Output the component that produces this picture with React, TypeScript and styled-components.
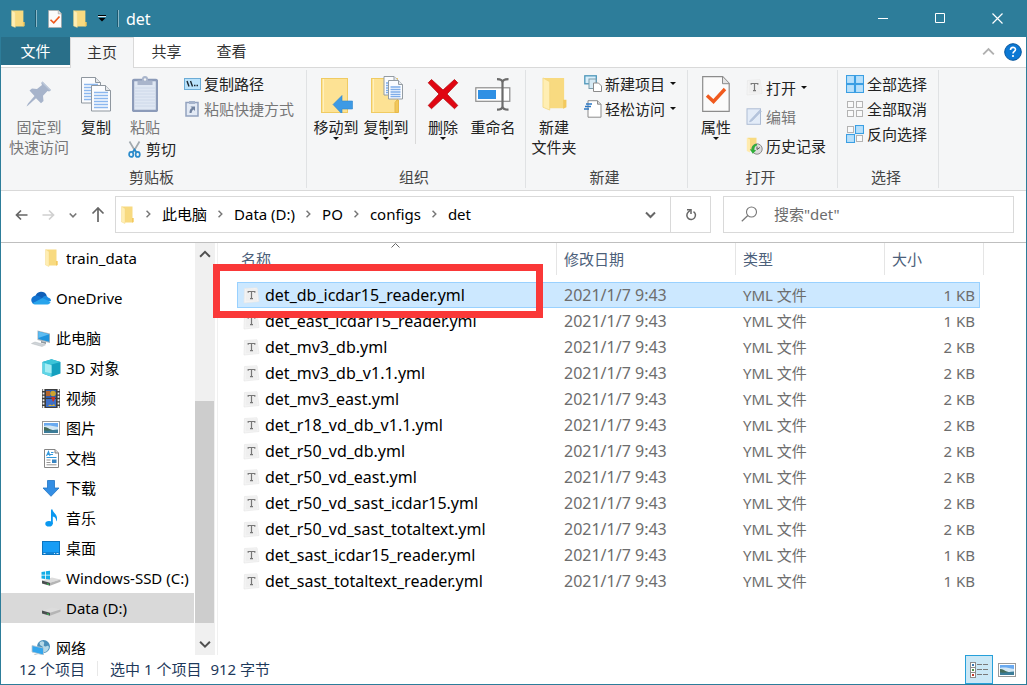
import React from "react";
import styled, { createGlobalStyle } from "styled-components";

const accent = "#2d7d9a";
const line = "#d9d9d9";

const Global = createGlobalStyle`
  *, *::before, *::after { box-sizing: border-box; }
  body {
    margin: 0;
    font: 15px/20px "Noto Sans", "Noto Sans CJK SC", sans-serif;
    color: #000;
    background: #fff;
  }
  button {
    font: inherit;
    color: inherit;
    background: none;
    border: 0;
    padding: 0;
    white-space: nowrap;
  }
  svg { display: block; flex: none; }
`;

const Window = styled.div`
  display: flex;
  flex-direction: column;
  height: 100vh;
  background: #fff;
  border: 1px solid ${accent};
  border-top: 0;
  overflow: hidden;
`;

/* ---------- title bar ---------- */
const TitleBar = styled.header`
  flex: none;
  display: flex;
  align-items: center;
  height: 37px;
  padding-left: 10px;
  background: ${accent};
  color: #fff;
`;
const TitleRule = styled.span`
  width: 2px;
  height: 17px;
  background: #1d5a70;
  border-right: 1px solid #8ab8c8;
`;
const QuickTools = styled.div`
  display: flex;
  align-items: center;
  gap: 11px;
  margin: 0 11px 0 10px;
`;
const Title = styled.h1`
  margin: 0 0 0 7px;
  font-size: 16px;
  font-weight: 400;
  line-height: 20px;
`;
const WindowButtons = styled.div`
  display: flex;
  margin-left: auto;
`;
const WindowButton = styled.button`
  display: grid;
  place-items: center;
  width: 57px;
  height: 37px;
`;

/* ---------- ribbon ---------- */
const TabBar = styled.nav`
  flex: none;
  display: flex;
  align-items: flex-start;
  height: 31px;
  border-bottom: 1px solid ${line};
  color: #333;
`;
const Tab = styled.button<{ $kind?: "file" | "active" }>`
  width: ${(p) => (p.$kind === "file" ? 69 : p.$kind === "active" ? 64 : 65)}px;
  height: ${(p) => (p.$kind === "active" ? 31 : 28)}px;
  padding-bottom: ${(p) => (p.$kind === "active" ? 2 : 0)}px;
  background: ${(p) => (p.$kind === "file" ? "#296f89" : p.$kind === "active" ? "#f5f6f7" : "transparent")};
  color: ${(p) => (p.$kind === "file" ? "#fff" : "inherit")};
  border: ${(p) => (p.$kind === "active" ? `1px solid ${line}` : "0")};
  border-bottom: 0;
`;
const TabTools = styled.div`
  display: flex;
  align-items: center;
  gap: 9px;
  height: 29px;
  margin-left: auto;
  padding-right: 4px;
`;
const IconButton = styled.button`
  display: grid;
  place-items: center;
`;
const Ribbon = styled.div`
  flex: none;
  display: flex;
  padding: 2px 0;
  background: #f5f6f7;
  border-bottom: 1px solid ${line};
  color: #222;
`;
const Group = styled.section<{ $width: number }>`
  display: flex;
  flex-direction: column;
  width: ${(p) => p.$width}px;
  height: 118px;
  padding-bottom: 1px;
  border-right: 1px solid #e0e2e4;
`;
const GroupBody = styled.div<{ $inset?: number }>`
  flex: 1;
  display: flex;
  align-items: flex-start;
  padding-left: ${(p) => p.$inset ?? 0}px;
`;
const GroupLabel = styled.h2`
  margin: 0;
  padding-right: 4px;
  font-size: 15px;
  font-weight: 400;
  line-height: 20px;
  text-align: center;
  color: #444;
`;
const BigButton = styled.button<{ $width: number }>`
  display: flex;
  flex-direction: column;
  align-items: center;
  width: ${(p) => p.$width}px;
  padding-top: 6px;
  line-height: 20px;
  &:disabled { color: #777; }
`;
const BigIcon = styled.span`
  display: grid;
  place-items: center;
  height: 36px;
  margin-bottom: 5px;
`;
const Stack = styled.div<{ $pitch: number; $left?: number }>`
  display: flex;
  flex-direction: column;
  align-items: flex-start;
  padding-top: ${(p) => (p.$pitch > 25 ? 3 : 1)}px;
  margin-left: ${(p) => p.$left ?? 0}px;
  & > button { height: ${(p) => p.$pitch}px; }
`;
const PasteStack = styled.div`
  display: flex;
  flex-direction: column;
  align-items: flex-start;
  gap: 2px;
  & > button + button { padding-left: 10px; }
`;
const SmallButton = styled.button`
  display: flex;
  align-items: center;
  gap: 3px;
  &:disabled { color: #777; }
`;
const SmallIcon = styled.span`
  display: grid;
  place-items: center;
  width: 18px;
  height: 18px;
`;
const GroupRule = styled.span`
  width: 1px;
  height: 55px;
  margin: 19px 2px 0 4px;
  background: ${line};
`;
const CaretGap = styled.span`
  margin-left: 2px;
`;

/* ---------- address row ---------- */
const AddressRow = styled.div`
  flex: none;
  display: flex;
  align-items: flex-start;
  height: 52px;
  padding: 5px 12px 0 14px;
  border-bottom: 1px solid #bfbfbf;
`;
const NavButtons = styled.div`
  display: flex;
  align-items: center;
  gap: 14px;
  width: 100px;
  height: 37px;
`;
const AddressBox = styled.div`
  flex: 1;
  display: flex;
  align-items: center;
  height: 37px;
  padding-left: 5px;
  border: 1px solid ${line};
`;
const Crumbs = styled.ol`
  flex: 1;
  display: flex;
  align-items: center;
  margin: 0;
  padding: 0 0 2px 1px;
  list-style: none;
  li { display: flex; align-items: center; }
  svg { margin: 0 10px 0 9px; }
  a { color: inherit; text-decoration: none; white-space: nowrap; }
`;
const BoxButton = styled(IconButton)<{ $ruled?: boolean }>`
  width: 40px;
  height: 35px;
  border-left: ${(p) => (p.$ruled ? `1px solid ${line}` : "0")};
`;
const SearchBox = styled.label`
  display: flex;
  align-items: center;
  gap: 16px;
  width: 291px;
  height: 37px;
  margin-left: 12px;
  padding: 0 0 2px 17px;
  border: 1px solid ${line};
  input {
    flex: 1;
    min-width: 0;
    padding: 0;
    border: 0;
    outline: 0;
    font: inherit;
    background: none;
  }
  input::placeholder { color: #6d6d6d; opacity: 1; }
`;

/* ---------- body ---------- */
const BodyFrame = styled.div`
  position: relative;
  flex: 1;
  display: flex;
  min-height: 0;
`;
const Body = styled.div`
  flex: 1;
  display: flex;
  min-width: 0;
  min-height: 0;
`;
const Tree = styled.nav`
  flex: none;
  width: 194px;
  overflow: hidden;
`;
const TreeItem = styled.a<{ $level: number; $gap?: boolean; $active?: boolean }>`
  display: flex;
  align-items: center;
  gap: 5px;
  height: 30px;
  margin-top: ${(p) => (p.$gap ? 10 : 0)}px;
  margin-right: 1px;
  padding-left: ${(p) => (p.$level ? 40 : 30)}px;
  background: ${(p) => (p.$active ? "#d9d9d9" : "transparent")};
  color: #000;
  text-decoration: none;
  white-space: nowrap;
`;
const TreeIcon = styled.span`
  flex: none;
  display: grid;
  place-items: center;
  width: 20px;
`;
const ScrollBar = styled.div`
  flex: none;
  display: flex;
  flex-direction: column;
  width: 20px;
  background: #f0f0f0;
`;
const ScrollButton = styled(IconButton)`
  height: 22px;
`;
const Track = styled.div`
  flex: 1;
  display: flex;
  flex-direction: column;
  justify-content: flex-end;
  padding-bottom: 10px;
`;
const Thumb = styled.div`
  height: 62%;
  margin-right: 1px;
  background: #cdcdcd;
`;
const Files = styled.main`
  position: relative;
  flex: 1;
  min-width: 0;
  margin-left: 2px;
  padding-left: 19px;
  border-left: 1px solid #f0f0f0;
  overflow: hidden;
`;
const FileTable = styled.table`
  width: 747px;
  table-layout: fixed;
  border-spacing: 0;
  tbody::before { content: ""; display: table-row; height: 7px; }
`;
const HeadCell = styled.th`
  position: relative;
  height: 32px;
  padding: 0 0 0 7px;
  border-right: 1px solid #e5e5e5;
  font-weight: 400;
  line-height: 20px;
  text-align: left;
  color: #4c607a;
  &:first-child { padding-left: 4px; }
`;
const SortMark = styled.span`
  position: absolute;
  top: 0;
  left: 50%;
  margin-left: -6px;
`;
const Row = styled.tr<{ $selected?: boolean }>`
  td {
    height: 26px;
    padding: 0 0 0 7px;
    line-height: 24px;
    color: #6d6d6d;
    white-space: nowrap;
    background: ${(p) => (p.$selected ? "#cce8ff" : "transparent")};
    border: 0 solid ${(p) => (p.$selected ? "#99d1ff" : "transparent")};
    border-width: 1px 0;
  }
  td:first-child { border-left-width: 1px; padding-left: 5px; color: #000; font-size: 16px; }
  td:nth-child(2) { font-size: 16px; }
  td:nth-child(4) { border-right-width: 1px; padding-right: 4px; text-align: right; }
  td:last-child { padding: 0; background: none; border: 0; }
`;
const FileName = styled.span`
  display: flex;
  align-items: center;
  gap: 5px;
`;
const Highlight = styled.div`
  position: absolute;
  top: 21px;
  left: 212px;
  width: 330px;
  height: 54px;
  border: 7px solid #fa3838;
  pointer-events: none;
`;

/* ---------- status bar ---------- */
const StatusBar = styled.footer`
  flex: none;
  display: flex;
  align-items: center;
  height: 29px;
  padding-left: 18px;
  color: #1e395b;
`;
const StatusText = styled.div`
  display: flex;
  align-items: center;
  padding-bottom: 2px;
`;
const StatusRule = styled.span`
  width: 1px;
  height: 15px;
  margin: 0 12px;
  background: #e8e8e8;
`;
const StatusGap = styled.span`
  margin-left: 9px;
`;
const Views = styled.div`
  display: flex;
  align-self: stretch;
  margin-left: auto;
  padding-right: 5px;
`;
const ViewButton = styled(IconButton)<{ $on?: boolean }>`
  width: 28px;
  border: 1px solid ${(p) => (p.$on ? "#26a0da" : "transparent")};
  background: ${(p) => (p.$on ? "#cbe8f6" : "transparent")};
`;

/* ---------- drawings ---------- */
const FolderIcon = ({ w = 13, h = 18 }: { w?: number; h?: number }) => (
  <svg width={w} height={h} viewBox="0 0 13 18" preserveAspectRatio="none">
    <path d="M1 0.5h10.500v16H3z" fill="#f8da80" />
    <path d="M11 12h1.700v4l-1.700.800z" fill="#f3c95e" />
    <path d="M.5.500 4 2.500v15L.500 16z" fill="#ffeeb3" stroke="#f3d67e" strokeWidth=".4" />
  </svg>
);
const Page = ({ tick, w, h }: { tick?: boolean; w: number; h: number }) => (
  <svg width={w} height={h} viewBox="0 0 28 36">
    <path d="M.7.700h20l6.500 6.800v27.800H.700z" fill="#fbfbfb" stroke="#8c8c8c" strokeWidth="1.200" />
    <path d="M20.500.700v7h6.700" fill="#e4e4e4" stroke="#8c8c8c" />
    {tick && <path d="M5 19.500l6.500 6L23 13" fill="none" stroke="#f05a1e" strokeWidth="3.400" />}
  </svg>
);
const Caret = () => (
  <svg width="6" height="3" viewBox="0 0 6 3"><path d="M0 0h6L3 3z" fill="#111" /></svg>
);
const Chevron = ({ dir, size = 11, color = "#666", weight = 1.6 }: { dir: "up" | "down" | "right"; size?: number; color?: string; weight?: number }) => {
  const d = { up: "M1 8l4.500-4.500L10 8", down: "M1 3.500L5.500 8 10 3.500", right: "M3.500 1L8 5.500 3.500 10" }[dir];
  return <svg width={size} height={size} viewBox="0 0 11 11"><path d={d} fill="none" stroke={color} strokeWidth={weight} /></svg>;
};
const PinIcon = () => (
  <svg width="26" height="26" viewBox="0 0 26 26">
    <path d="M16.500.500 25 9l-1.800 1.500-1.700-.5-4.500 4.800.500 5.200-2.500 2.200-5-5L2 24.500l-1.500 1L2 22.500l6.500-7.500-5-5.500L6 7.500l5 .6L16 4l-.8-2z" fill="#a7b4cb" />
    <path d="M16.500.500 25 9l-1 .800L15.500 1.500z" fill="#bcc8da" />
  </svg>
);
const CopyIcon = () => (
  <svg width="30" height="35" viewBox="0 0 30 35">
    {[[0.5, 0.5], [10.500, 8.500]].map(([x, y]) => (
      <g key={x} transform={`translate(${x} ${y})`}>
        <path d="M0 0h14l5 5v20.500H0z" fill="#fbfcfe" stroke="#8f979f" />
        <path d="M14 0v5h5" fill="#e5e8eb" stroke="#8f979f" />
        <path d="M2.500 7h14M2.500 10h14M2.500 13h14M2.500 16h14M2.500 19h14M2.500 22h14" stroke="#8bb7ef" strokeWidth="1.300" />
      </g>
    ))}
  </svg>
);
const PasteIcon = () => (
  <svg width="26" height="36" viewBox="0 0 26 36">
    <rect x="1" y="4" width="24" height="31" rx="1.500" fill="#dfe7f3" stroke="#8c9bb9" strokeWidth="2.400" />
    <path d="M3 12h20M3 15h20M3 18h20M3 21h20M3 24h20M3 27h20M3 30h20" stroke="#cdd8e9" />
    <path d="M5.500 4.500h4.500V3a3 3 0 0 1 6 0v1.500h4.500V9h-15z" fill="#a9b5cc" />
    <circle cx="13" cy="3.500" r="1.200" fill="#f5f6f7" />
  </svg>
);
const CutIcon = () => (
  <svg width="13" height="17" viewBox="0 0 13 17">
    <path d="M1.500.500 7.700 11M11.500.500 5.300 11" stroke="#a2a9ae" strokeWidth="1.700" fill="none" />
    <g fill="none" stroke="#2b8bcb" strokeWidth="1.700">
      <ellipse cx="3.200" cy="13.400" rx="2.100" ry="2.500" />
      <ellipse cx="9.700" cy="13.400" rx="2.100" ry="2.500" />
      <path d="M4.500 11.200 6.500 8.500l2 2.700" />
    </g>
  </svg>
);
const PathIcon = () => (
  <svg width="17" height="12" viewBox="0 0 17 12">
    <rect x=".5" y=".5" width="16" height="11" fill="#b9e2fb" stroke="#6cacd6" />
    <path d="M3 3l2 5.500M6.500 3l2 5.500" stroke="#1c2730" strokeWidth="1.400" />
    <path d="M10 7.500h1.500M12.500 7.500H14" stroke="#1c2730" strokeWidth="1.500" />
  </svg>
);
const ShortcutIcon = () => (
  <svg width="14" height="17" viewBox="0 0 14 17">
    <rect x="1" y="2.500" width="12" height="13.500" fill="#e3eaf5" stroke="#92a2bf" strokeWidth="1.500" />
    <path d="M4 1h6v3H4z" fill="#a5b3cb" />
    <path d="M4.500 13c0-3 1-4.500 2.500-5L5.500 6.500H10V11L8.500 9.500C7.500 10 7 11 6.500 13z" fill="#71829f" />
  </svg>
);
const BigFolder = ({ copy }: { copy?: boolean }) => (
  <svg width="33" height="37" viewBox="0 0 33 37">
    <rect x="1.500" y="2.500" width="26" height="34" fill="#fde294" stroke="#f0cb62" />
    <path d="M3.500 3v33" stroke="#fff0bd" />
    {copy ? (
      <>
        <path d="M25 36.500v-10l2-2.500h1.500v12.500z" fill="#f2c75a" stroke="#e6b94b" />
        {[[14, 0.500], [18.500, 4.500]].map(([x, y]) => (
          <g key={x} transform={`translate(${x} ${y})`}>
            <path d="M0 0h10l4 4v14.500H0z" fill="#fafcff" stroke="#949ca3" />
            <path d="M10 0v4h4" fill="#e5e8eb" stroke="#949ca3" />
            <path d="M2 6.500h10M2 9h10M2 11.500h10M2 14h10M2 16.200h10" stroke="#7eace9" strokeWidth="1.300" />
          </g>
        ))}
      </>
    ) : (
      <path d="M13 28.500 22 19.500v5.500h10.500v8H22v5z" fill="#3d9ae5" stroke="#2f86cf" strokeWidth=".6" />
    )}
  </svg>
);
const DeleteIcon = () => (
  <svg width="32" height="32" viewBox="0 0 32 32">
    <path d="M4.500 1.500 16 12 27.500 1.500l3.300 3.300L20 16l10.800 11.500-3.300 3.200L16 20 4.500 30.700l-3.300-3.200L12 16 1.200 4.800z" fill="#e00612" stroke="#b60c12" strokeWidth=".8" />
  </svg>
);
const RenameIcon = () => (
  <svg width="36" height="33" viewBox="0 0 36 33">
    <rect x=".8" y="9.800" width="34" height="13.500" fill="#fff" stroke="#8c8c8c" strokeWidth="1.200" />
    <rect x="3" y="12" width="18" height="9" fill="#2f90e4" />
    <path d="M22 1.200c4 0 5.500.800 5.500 3.500v23.500c0 2.500-1.500 3.500-5.500 3.500M33.500 1.200c-4 0-6 .800-6 3.500v23.500c0 2.500 2 3.500 6 3.500" fill="none" stroke="#6b6b6b" strokeWidth="2.200" />
  </svg>
);
const NewItemIcon = () => (
  <svg width="18" height="17" viewBox="0 0 18 17">
    <rect x=".8" y=".8" width="11.500" height="8" fill="#d8effb" stroke="#4d96b9" strokeWidth="1.300" />
    <rect x="5" y="4" width="7" height="9.500" fill="#d6eaf5" stroke="#7d9dac" />
    <path d="M9.500 8h5l3 3v5.500h-8z" fill="#fff" stroke="#8c8c8c" />
  </svg>
);
const EasyIcon = () => (
  <svg width="18" height="18" viewBox="0 0 18 18">
    <path d="M4 .700h9.500L17 4.200v13H4z" fill="#fff" stroke="#8c8c8c" />
    <path d="M13.500.700v3.500H17" fill="#ddd" stroke="#8c8c8c" />
    <path d="M2 4h6M1 6.500h6M0 9h5" stroke="#2c78c3" strokeWidth="1.600" />
  </svg>
);
const TextFileIcon = () => (
  <svg width="17" height="17" viewBox="0 0 17 17">
    <path d="M1.500 1.500 14 .8 16 14.500 1 16z" fill="#f6f6f6" stroke="#e6e6e6" strokeWidth=".7" />
    <rect x="2.500" y="2" width="12" height="12.500" fill="#efefef" />
    <path d="M5.200 5.800V4.500h6.600v1.300M8.500 4.600v7M7 11.700h3" stroke="#777" strokeWidth="1.200" fill="none" />
  </svg>
);
const EditIcon = () => (
  <svg width="17" height="17" viewBox="0 0 17 17">
    <rect x="1" y=".8" width="13.500" height="15.500" fill="#e3ecf8" stroke="#adbcd4" />
    <path d="M3.500 14 4.200 12.200 13.800 2l1.700 1.300L6 13z" fill="#b5c5dd" stroke="#9fb0cc" strokeWidth=".4" />
  </svg>
);
const HistoryIcon = () => (
  <svg width="17" height="18" viewBox="0 0 17 18">
    <path d="M1.500.800h9v13.500l-9-1z" fill="#f8da80" />
    <path d="M.8.800 4 2.500v13L.8 14z" fill="#ffebae" />
    <circle cx="11" cy="12" r="5.200" fill="#dcdcdc" stroke="#8c8c8c" />
    <path d="M11 9.500v3l2.800-2" stroke="#555" fill="none" />
    <path d="M11 7C7.500 6.800 5.500 9.500 5.800 12.500l-2-.3 3 4.500 3.400-3.500-1.800-.2C8.300 10.500 9 8.800 11 8.500z" fill="#2fae3a" />
  </svg>
);
const SelectIcon = ({ on }: { on: number[] }) => (
  <svg width="18" height="18" viewBox="0 0 18 18">
    {[[0, 0], [9, 0], [0, 9], [9, 9]].map(([x, y], i) =>
      on.includes(i) ? (
        <rect key={i} x={x + 0.5} y={y + 0.5} width="8" height="8" fill="#b8e0fb" stroke="#3b9fe3" strokeWidth="1.100" />
      ) : (
        <rect key={i} x={x + 1.5} y={y + 1.5} width="6" height="6" fill="#fafafa" stroke="#b3b3b3" />
      )
    )}
  </svg>
);
const Arrow = ({ dir, color }: { dir: "left" | "right" | "up"; color: string }) => (
  <svg width={dir === "up" ? 14 : 13} height="16" viewBox="0 0 13 16">
    <path
      d={{ left: "M6 3.500 1.500 8 6 12.500M1.500 8H12.500", right: "M7 3.500 11.500 8 7 12.500M11.500 8H.500", up: "M1 6.500 6.500 1 12 6.500M6.500 1v14" }[dir]}
      fill="none" stroke={color} strokeWidth="1.700"
    />
  </svg>
);
const RefreshIcon = () => (
  <svg width="12" height="13" viewBox="0 0 12 13">
    <path d="M8.500 3.600A4.300 4.300 0 1 1 3.300 4L5.300 2.200" fill="none" stroke="#666" strokeWidth="1.500" />
    <path d="M2 1.700h4V6" fill="none" stroke="#666" strokeWidth="1.500" />
  </svg>
);
const SearchIcon = () => (
  <svg width="17" height="16" viewBox="0 0 17 16">
    <circle cx="10.500" cy="6" r="5" fill="none" stroke="#777" strokeWidth="1.100" />
    <path d="M6.800 9.500.800 15.300" stroke="#777" strokeWidth="1.200" />
  </svg>
);
const CloudIcon = () => (
  <svg width="20" height="14" viewBox="0 0 20 14">
    <path d="M4.500 5A6 6 0 0 1 15.500 4l.5 4-9 2z" fill="#0f5fb8" />
    <path d="M4.500 4.500c2-.3 3.500.500 8 3.500L2 12.500C-1 10 0 5.500 4.500 4.500z" fill="#1273d0" />
    <path d="M11.500 6.500C13 4.500 16 4.500 17 6.500c2 .2 3 1.800 3 3.500L14 11z" fill="#1b8be2" />
    <path d="M1.500 12.200 11.500 7 19.500 11c-.5 1.500-1.500 2.500-3 2.500H4.500c-1 0-2.200-.3-3-1.300z" fill="#28a4ec" />
  </svg>
);
const PcIcon = () => (
  <svg width="20" height="17" viewBox="0 0 20 17">
    <path d="M6.500.500 19 3.500v9.500L6.500 10z" fill="#aab4bb" />
    <path d="M7.300 1.500 18.200 4.200v7.600L7.300 9z" fill="#1e93dd" />
    <path d="M7.300 1.500 18.200 4.200 7.300 8z" fill="#5cbcf2" />
    <path d="M10 11l5 1.200v1.800l-5-1.200z" fill="#8e989f" />
    <path d="M.5 13.500 4 12l10.500 2.800-3.500 1.700z" fill="#cfd4d8" stroke="#b4babe" strokeWidth=".5" />
  </svg>
);
const CubeIcon = () => (
  <svg width="19" height="18" viewBox="0 0 19 18">
    <path d="M9.500.300 18.500 3v11.500l-9 3.200-9-3.200V3z" fill="#14a0bf" />
    <path d="M.5 3l9 2.500v12.200l-9-3.200z" fill="#5fd5e6" />
    <path d="M9.500.300 18.500 3l-9 2.500L.5 3z" fill="#3cc4d8" />
    <path d="M3 4.500l6.500 1.700v8L3 13z" fill="#a5ecf3" />
  </svg>
);
const VideoIcon = () => (
  <svg width="18" height="19" viewBox="0 0 18 19">
    <rect width="18" height="19" fill="#3c3c3c" />
    <path d="M1.500 0v19M16.500 0v19" stroke="#eee" strokeWidth="1.800" strokeDasharray="2 1.400" />
    <rect x="4" y="1" width="10" height="8" fill="#315cab" />
    <rect x="4" y="10" width="10" height="8" fill="#3f6fc6" />
    <path d="M4 2h4v5H4z" fill="#b5652b" />
    <circle cx="11" cy="4.500" r="2.800" fill="#cfa42e" />
    <path d="M9 8h4v2l-2 3z" fill="#c73128" />
    <path d="M6 17l2-1.500 2 1 2-1.500 1 2z" fill="#ddb431" />
  </svg>
);
const PictureIcon = () => (
  <svg width="18" height="14" viewBox="0 0 18 14">
    <rect x=".5" y=".5" width="17" height="13" fill="#fff" stroke="#999" />
    <rect x="2" y="2" width="14" height="10" fill="#6aaaf0" />
    <path d="M2 5c4-1 9 0 14 1v3H2z" fill="#d3e7f4" />
    <path d="M2 6c3 0 5 2 7 2.500l4 1.500H2z" fill="#456b5a" />
    <path d="M2 9.500c5 .5 9-.5 14-1V12H2z" fill="#3c7c98" />
  </svg>
);
const DocIcon = () => (
  <svg width="15" height="19" viewBox="0 0 15 19">
    <path d="M.5.500h10.500l3.500 3.500v14.500H.5z" fill="#fff" stroke="#858585" />
    <path d="M11 .500V4h3.500" fill="#ddd" stroke="#858585" />
    <path d="M2.500 7 4.500 2.500 6 7M3 5.500h6M7 3.500h2.500M2.500 8.500h10" stroke="#3399dd" strokeWidth="1.100" fill="none" />
    <path d="M2.500 11h4M2.500 13.500h4M2.500 15.800h10" stroke="#888" strokeWidth=".9" />
    <rect x="8" y="10.500" width="4.500" height="3.500" fill="#3885c2" />
  </svg>
);
const DownloadIcon = () => (
  <svg width="18" height="17" viewBox="0 0 18 17">
    <path d="M5.500.500h7V8H17l-8 8.300L1 8h4.500z" fill="#338ee4" stroke="#1f74c4" strokeWidth=".8" />
  </svg>
);
const MusicIcon = () => (
  <svg width="13" height="18" viewBox="0 0 13 18">
    <ellipse cx="4" cy="14.700" rx="3.700" ry="2.800" fill="#0a98f0" />
    <path d="M6 15V.500h1.500C8 4 12.500 5 12 10c0 1-.5 2-1 2.500.5-3-1-4.500-3.200-5V15z" fill="#0a98f0" />
  </svg>
);
const DesktopIcon = () => (
  <svg width="18" height="14" viewBox="0 0 18 14">
    <rect x=".5" y=".5" width="17" height="13" fill="#189df5" stroke="#0b75c0" />
    <path d="M1 12h16" stroke="#0e7ccc" strokeWidth="1.500" />
    <path d="M1.500 12.500h2M12 12.500h1M14.500 12.500h2" stroke="#fff" strokeWidth=".8" />
  </svg>
);
const Disk = ({ win }: { win?: boolean }) => (
  <svg width="20" height="17" viewBox="0 0 20 17">
    <path d="M1 10.500 11 7.500l8.500 2L9 12.800z" fill="#dcdcdc" />
    <path d="M19.500 9.500v2.300L9 15.800v-3z" fill="#b5b5b5" />
    <path d="M1 10.500 9 12.800v3L1 13.500z" fill="#4a4f50" />
    <path d="M6 13.300l2 .6v1l-2-.6z" fill="#2fd64e" />
    {win && <path d="M.5 2 4 1.500v3.300H.5zM4.800 1.300 9 .8v4H4.800zM.5 5.600H4V9L.5 8.500zM4.800 5.600H9v4l-4.200-.5z" fill="#14ade6" />}
  </svg>
);
const NetworkIcon = () => (
  <svg width="20" height="18" viewBox="0 0 20 18">
    <circle cx="12.500" cy="7.500" r="6.500" fill="#4a8fba" />
    <path d="M9 3c3-2 5 0 4 2s1 3 3 2 3 2 0 5-5-1-4-3-5-2-3-6z" fill="#b5d9e8" />
    <path d="M1 6.500 12.500 9v7L1 13z" fill="#34a6ed" stroke="#bcc9d2" strokeWidth=".8" />
    <path d="M4 15l5 1.500-3 1-4-1z" fill="#bfc6ca" />
  </svg>
);
const DetailsIcon = () => (
  <svg width="19" height="16" viewBox="0 0 19 16">
    {["#3b78b0", "#4f9148", "#c23b2b"].map((c, i) => (
      <g key={c}>
        <rect x=".5" y={i * 5 + 0.5} width="5" height="5" fill="#fff" stroke="#8c8c8c" />
        <rect x="2" y={i * 5 + 2} width="2" height="2" fill={c} />
        <path d={`M7 ${i * 5 + 2.5}h5M13 ${i * 5 + 2.5}h5`} stroke="#7a7a7a" />
      </g>
    ))}
  </svg>
);

/* ---------- data ---------- */
const tree: { label: string; icon: React.ReactNode; level: number; gap?: boolean; active?: boolean }[] = [
  { label: "train_data", icon: <FolderIcon />, level: 1 },
  { label: "OneDrive", icon: <CloudIcon />, level: 0, gap: true },
  { label: "此电脑", icon: <PcIcon />, level: 0, gap: true },
  { label: "3D 对象", icon: <CubeIcon />, level: 1 },
  { label: "视频", icon: <VideoIcon />, level: 1 },
  { label: "图片", icon: <PictureIcon />, level: 1 },
  { label: "文档", icon: <DocIcon />, level: 1 },
  { label: "下载", icon: <DownloadIcon />, level: 1 },
  { label: "音乐", icon: <MusicIcon />, level: 1 },
  { label: "桌面", icon: <DesktopIcon />, level: 1 },
  { label: "Windows-SSD (C:)", icon: <Disk win />, level: 1 },
  { label: "Data (D:)", icon: <Disk />, level: 1, active: true },
  { label: "网络", icon: <NetworkIcon />, level: 0, gap: true },
];

const files: [string, number][] = [
  ["det_db_icdar15_reader.yml", 1],
  ["det_east_icdar15_reader.yml", 1],
  ["det_mv3_db.yml", 2],
  ["det_mv3_db_v1.1.yml", 2],
  ["det_mv3_east.yml", 2],
  ["det_r18_vd_db_v1.1.yml", 2],
  ["det_r50_vd_db.yml", 2],
  ["det_r50_vd_east.yml", 2],
  ["det_r50_vd_sast_icdar15.yml", 2],
  ["det_r50_vd_sast_totaltext.yml", 2],
  ["det_sast_icdar15_reader.yml", 1],
  ["det_sast_totaltext_reader.yml", 1],
];

type ActionProps = { icon: React.ReactNode; label: string; menu?: boolean; disabled?: boolean };

const Small = ({ icon, label, menu, disabled }: ActionProps) => (
  <SmallButton disabled={disabled}>
    <SmallIcon>{icon}</SmallIcon>
    {label}
    {menu && <CaretGap><Caret /></CaretGap>}
  </SmallButton>
);

const Big = ({ icon, label, second, menu, disabled, width }: ActionProps & { second?: string; width: number }) => (
  <BigButton $width={width} disabled={disabled}>
    <BigIcon>{icon}</BigIcon>
    <span>{label}</span>
    {second && <span>{second}</span>}
    {menu && <Caret />}
  </BigButton>
);

export default function App() {
  return (
    <Window>
      <Global />
      <TitleBar>
        <FolderIcon w={14} h={18} />
        <QuickTools>
          <TitleRule />
          <Page tick w={14} h={18} />
          <FolderIcon w={14} h={18} />
          <IconButton aria-label="自定义快速访问工具栏">
            <svg width="8" height="7" viewBox="0 0 8 7">
              <path d="M0 .5h8" stroke="#000" />
              <path d="M0 1.500h8" stroke="#dce9ee" />
              <path d="M.5 3h7L4 6.500z" fill="#000" />
            </svg>
          </IconButton>
        </QuickTools>
        <TitleRule />
        <Title>det</Title>
        <WindowButtons>
          <WindowButton aria-label="最小化">
            <svg width="11" height="11" viewBox="0 0 11 11"><path d="M0 5.500h10" stroke="#fff" /></svg>
          </WindowButton>
          <WindowButton aria-label="最大化">
            <svg width="11" height="11" viewBox="0 0 11 11"><path d="M.5.500h9v9h-9z" fill="none" stroke="#fff" /></svg>
          </WindowButton>
          <WindowButton aria-label="关闭">
            <svg width="11" height="11" viewBox="0 0 11 11"><path d="M.5.500l10 10M10.500.500l-10 10" stroke="#fff" strokeWidth="1.200" /></svg>
          </WindowButton>
        </WindowButtons>
      </TitleBar>

      <TabBar>
        <Tab $kind="file">文件</Tab>
        <Tab $kind="active">主页</Tab>
        <Tab>共享</Tab>
        <Tab>查看</Tab>
        <TabTools>
          <IconButton aria-label="最小化功能区"><Chevron dir="up" size={13} color="#b0b0b0" /></IconButton>
          <IconButton aria-label="帮助">
            <svg width="18" height="18" viewBox="0 0 18 18">
              <circle cx="9" cy="9" r="8.300" fill="#0b78d4" stroke="#07559b" />
              <path d="M6.500 7c0-3.500 5-3.300 5-.5 0 1.800-2.500 1.800-2.500 4" fill="none" stroke="#fff" strokeWidth="1.600" />
              <circle cx="9" cy="13" r="1.100" fill="#fff" />
            </svg>
          </IconButton>
        </TabTools>
      </TabBar>

      <Ribbon>
        <Group $width={306}>
          <GroupBody>
            <Big width={76} icon={<PinIcon />} label="固定到" second="快速访问" disabled />
            <Big width={38} icon={<CopyIcon />} label="复制" />
            <PasteStack>
              <Big width={60} icon={<PasteIcon />} label="粘贴" disabled />
              <Small icon={<CutIcon />} label="剪切" />
            </PasteStack>
            <Stack $pitch={25} $left={7}>
              <Small icon={<PathIcon />} label="复制路径" />
              <Small icon={<ShortcutIcon />} label="粘贴快捷方式" disabled />
            </Stack>
          </GroupBody>
          <GroupLabel>剪贴板</GroupLabel>
        </Group>
        <Group $width={219}>
          <GroupBody $inset={4}>
            <Big width={50} icon={<BigFolder />} label="移动到" menu />
            <Big width={50} icon={<BigFolder copy />} label="复制到" menu />
            <GroupRule />
            <Big width={50} icon={<DeleteIcon />} label="删除" menu />
            <Big width={50} icon={<RenameIcon />} label="重命名" />
          </GroupBody>
          <GroupLabel>组织</GroupLabel>
        </Group>
        <Group $width={162}>
          <GroupBody>
            <Big width={56} icon={<FolderIcon w={25} h={34} />} label="新建" second="文件夹" />
            <Stack $pitch={25} $left={2}>
              <Small icon={<NewItemIcon />} label="新建项目" menu />
              <Small icon={<EasyIcon />} label="轻松访问" menu />
            </Stack>
          </GroupBody>
          <GroupLabel>新建</GroupLabel>
        </Group>
        <Group $width={150}>
          <GroupBody>
            <Big width={56} icon={<Page tick w={28} h={36} />} label="属性" menu />
            <Stack $pitch={29} $left={1}>
              <Small icon={<TextFileIcon />} label="打开" menu />
              <Small icon={<EditIcon />} label="编辑" disabled />
              <Small icon={<HistoryIcon />} label="历史记录" />
            </Stack>
          </GroupBody>
          <GroupLabel>打开</GroupLabel>
        </Group>
        <Group $width={101}>
          <GroupBody>
            <Stack $pitch={25} $left={8}>
              <Small icon={<SelectIcon on={[0, 1, 2, 3]} />} label="全部选择" />
              <Small icon={<SelectIcon on={[]} />} label="全部取消" />
              <Small icon={<SelectIcon on={[1, 2]} />} label="反向选择" />
            </Stack>
          </GroupBody>
          <GroupLabel>选择</GroupLabel>
        </Group>
      </Ribbon>

      <AddressRow>
        <NavButtons>
          <IconButton aria-label="后退"><Arrow dir="left" color="#666" /></IconButton>
          <IconButton aria-label="前进"><Arrow dir="right" color="#d0d0d0" /></IconButton>
          <IconButton aria-label="最近位置"><Chevron dir="down" size={8} color="#777" weight={2.2} /></IconButton>
          <IconButton aria-label="上移"><Arrow dir="up" color="#666" /></IconButton>
        </NavButtons>
        <AddressBox>
          <FolderIcon />
          <Crumbs>
            {["此电脑", "Data (D:)", "PO", "configs", "det"].map((c) => (
              <li key={c}>
                <Chevron dir="right" size={8} color="#777" weight={2} />
                <a href="#">{c}</a>
              </li>
            ))}
          </Crumbs>
          <BoxButton aria-label="以前的位置"><Chevron dir="down" size={11} weight={2} /></BoxButton>
          <BoxButton $ruled aria-label="刷新"><RefreshIcon /></BoxButton>
        </AddressBox>
        <SearchBox>
          <SearchIcon />
          <input type="text" placeholder={'搜索"det"'} aria-label="搜索" />
        </SearchBox>
      </AddressRow>

      <BodyFrame>
        <Body>
          <Tree>
            {tree.map((t) => (
              <TreeItem key={t.label} href="#" $level={t.level} $gap={t.gap} $active={t.active}>
                <TreeIcon>{t.icon}</TreeIcon>
                {t.label}
              </TreeItem>
            ))}
          </Tree>
          <ScrollBar>
            <ScrollButton aria-label="向上滚动"><Chevron dir="up" size={12} color="#505050" weight={1.800} /></ScrollButton>
            <Track><Thumb /></Track>
            <ScrollButton aria-label="向下滚动"><Chevron dir="down" size={12} color="#505050" weight={1.800} /></ScrollButton>
          </ScrollBar>
          <Files>
            <FileTable>
              <colgroup>
                <col width="320" />
                <col width="179" />
                <col width="149" />
                <col width="95" />
                <col width="4" />
              </colgroup>
              <thead>
                <tr>
                  <HeadCell>
                    名称
                    <SortMark><svg width="9" height="5" viewBox="0 0 9 5"><path d="M.5 4.500l4-4 4 4" fill="none" stroke="#666" /></svg></SortMark>
                  </HeadCell>
                  <HeadCell>修改日期</HeadCell>
                  <HeadCell>类型</HeadCell>
                  <HeadCell colSpan={2}>大小</HeadCell>
                </tr>
              </thead>
              <tbody>
                {files.map(([name, kb], i) => (
                  <Row key={name} $selected={i === 0}>
                    <td><FileName><TextFileIcon />{name}</FileName></td>
                    <td>2021/1/7 9:43</td>
                    <td>YML 文件</td>
                    <td>{kb} KB</td>
                    <td />
                  </Row>
                ))}
              </tbody>
            </FileTable>
          </Files>
        </Body>
        <Highlight />
      </BodyFrame>

      <StatusBar>
        <StatusText>
          <span>12 个项目</span>
          <StatusRule />
          <span>选中 1 个项目</span>
          <StatusGap>912 字节</StatusGap>
        </StatusText>
        <Views>
          <ViewButton $on aria-label="详细信息"><DetailsIcon /></ViewButton>
          <ViewButton aria-label="大图标"><PictureIcon /></ViewButton>
        </Views>
      </StatusBar>
    </Window>
  );
}
